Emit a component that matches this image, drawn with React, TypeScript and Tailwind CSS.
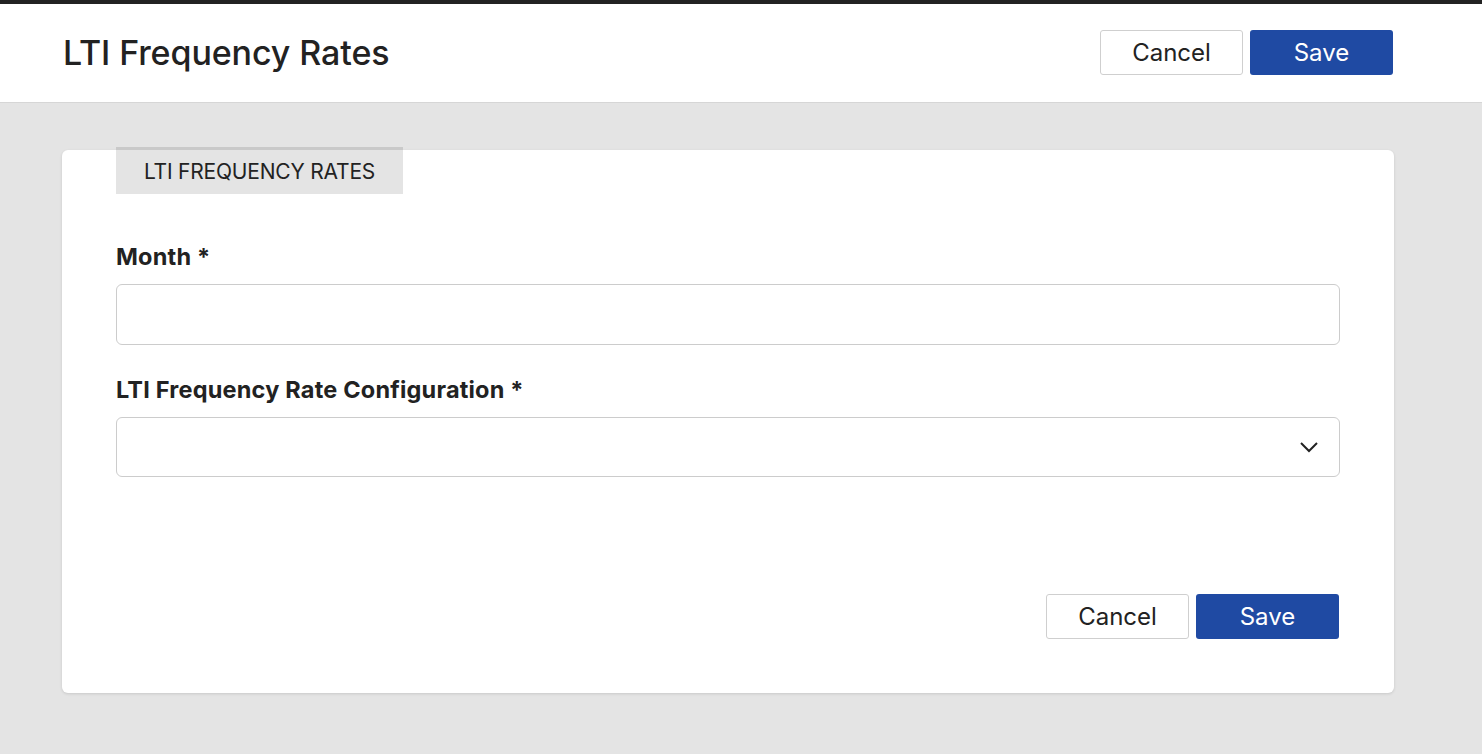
import React from "react";

const font = { fontFamily: "Inter, 'Noto Sans', sans-serif" };

function Buttons() {
  return (
    <div className="flex gap-[7px] mr-[1px]">
      <button className="w-[143px] h-[45px] rounded-[3px] border border-[#cfcfcf] bg-white text-[24px] text-[#222]">
        Cancel
      </button>
      <button className="w-[143px] h-[45px] rounded-[3px] bg-[#1f4aa3] text-[24px] text-white">
        Save
      </button>
    </div>
  );
}

export default function App() {
  return (
    <div className="min-h-[754px] bg-[#e4e4e4] text-[#222]" style={font}>
      <div className="h-[4px] bg-[#222]" />
      <header className="h-[99px] bg-white border-b border-[#d6d6d6] flex items-center justify-between pl-[63px] pr-[88px] pb-[1px]">
        <h1 className="text-[34px] font-medium tracking-[-0.1px]">LTI Frequency Rates</h1>
        <Buttons />
      </header>
      <main className="px-[62px] pr-[88px] pt-[47px]">
        <section className="bg-white rounded-[6px] shadow-[0_1px_3px_rgba(0,0,0,0.12)] px-[54px] pb-[54px]">
          <div className="inline-flex items-center justify-center w-[287px] h-[47px] -mt-[3px] bg-[#e4e4e4] border-t-[3px] border-[#c9c9c9] text-[21px] tracking-[-0.2px]">
            LTI FREQUENCY RATES
          </div>
          <div className="pt-[49px] flex flex-col">
            <label className="text-[23.5px] font-bold leading-[28px] tracking-[0.2px]">Month *</label>
            <input className="mt-[13px] h-[61px] rounded-[6px] border border-[#cccccc] px-4 outline-none" />
            <label className="mt-[31px] text-[23.5px] font-bold leading-[28px] tracking-[0.2px]">LTI Frequency Rate Configuration *</label>
            <div className="mt-[13px] h-[60px] rounded-[6px] border border-[#cccccc] flex items-center justify-end pr-[20px]">
              <svg width="20" height="12" viewBox="0 0 20 12" fill="none" stroke="#222" strokeWidth="2">
                <path d="M2 2l8 8 8-8" />
              </svg>
            </div>
            <div className="mt-[117px] flex justify-end">
              <Buttons />
            </div>
          </div>
        </section>
      </main>
    </div>
  );
}
